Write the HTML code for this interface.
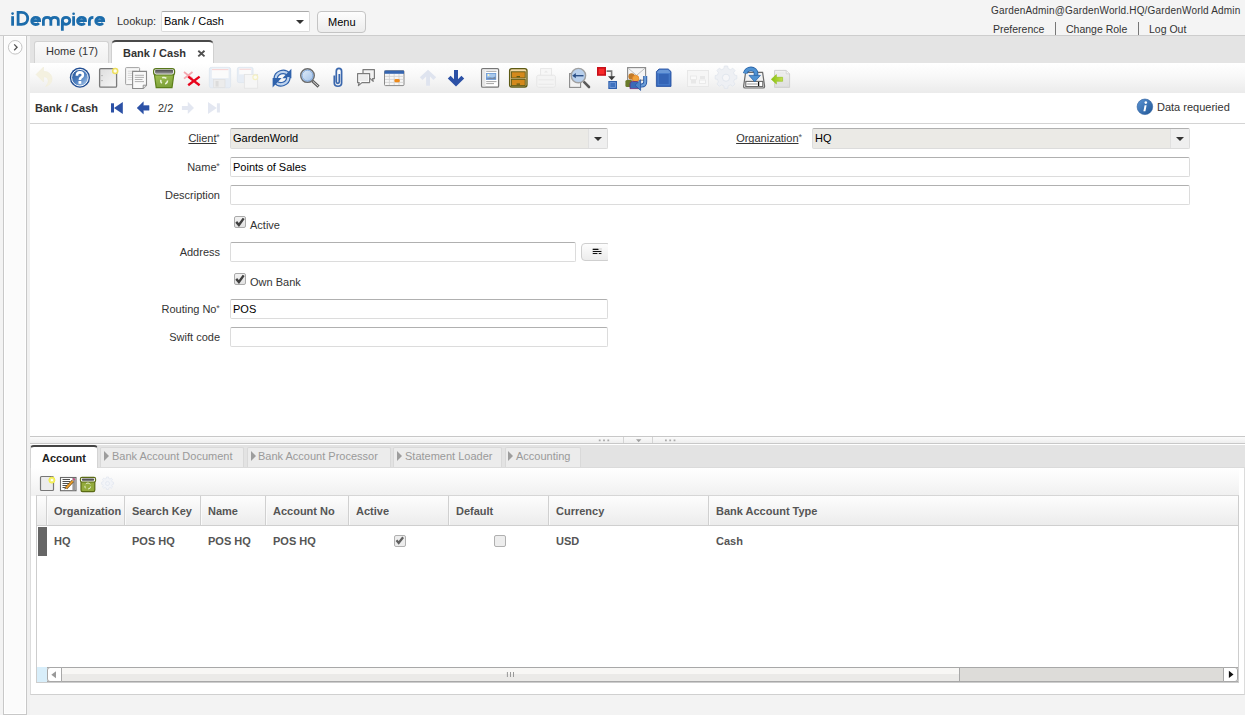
<!DOCTYPE html>
<html><head><meta charset="utf-8">
<style>
*{box-sizing:border-box;margin:0;padding:0}
html,body{width:1245px;height:715px;overflow:hidden;background:#f3f3f3;font-family:"Liberation Sans",sans-serif;font-size:11px;color:#333}
.a{position:absolute}
.t{position:absolute;white-space:nowrap;line-height:12px}
.b{font-weight:bold}
.r{text-align:right}
.u{text-decoration:underline;text-decoration-skip-ink:none}
#hdr{left:0;top:0;width:1245px;height:36px;background:#f4f4f4;border-bottom:1px solid #cdcdcd}
#lp{left:3px;top:36px;width:24px;height:679px;background:#fbfbfb;border:1px solid #c8c8c8;border-top:none;box-shadow:inset 0 0 0 1px #fff}
.fld{position:absolute;background:#fff;border:1px solid #dcdcdc;border-top-color:#b0b0b0;border-radius:2px}
.ro{background:#ebeae6}
.dbtn{position:absolute;background:#efefef;border-left:1px solid #e0e0e0}
.tri{position:absolute;width:0;height:0;border-left:4px solid transparent;border-right:4px solid transparent;border-top:4px solid #333}
.ast{position:absolute;font-size:9px;line-height:9px;color:#555}
.chk{position:absolute;width:12px;height:12px;border:1px solid #aaa;border-radius:2px;background:linear-gradient(#f2f2f2,#e2e2e2)}
svg{position:absolute;overflow:visible}
.dtab{position:absolute;top:447px;height:20px;background:#ececec;border:1px solid #d9d9d9;border-bottom:none;border-radius:2px 2px 0 0}
.dtt{position:absolute;top:450px;white-space:nowrap;line-height:12px;color:#9a9a9a}
.dtri{position:absolute;top:451px;width:0;height:0;border-top:5px solid transparent;border-bottom:5px solid transparent;border-left:5px solid #9d9d9d}
.gh{position:absolute;top:505px;white-space:nowrap;line-height:12px;font-weight:bold;color:#555}
.gv{position:absolute;top:535px;white-space:nowrap;line-height:12px;font-weight:bold;color:#555}
.gsep{position:absolute;top:496px;width:2px;height:29px;border-left:1px solid #d0d0d0;border-right:1px solid #fafafa}
</style></head><body>
<!-- HEADER -->
<div id="hdr" class="a"></div>
<svg style="left:0;top:0" width="110" height="35" viewBox="0 0 110 35">
  <g fill="none" stroke="#1c6cab" stroke-width="2.8">
    <path d="M12.6 16.2V25.7"/>
    <path d="M18.1 25.7V12.4H21.5C25.5 12.4 27.7 15.3 27.7 18.55C27.7 21.8 25.5 24.3 21.5 24.3H16.7"/>
    <path d="M31.7 20.6H39.6C39.6 18.5 37.9 17.4 35.65 17.4C33.4 17.4 31.7 19 31.7 20.95C31.7 23 33.4 24.5 35.65 24.5C37 24.5 38.2 24 38.9 23.1"/>
    <path d="M43.4 25.7V20.5C43.4 18.5 44.9 17.4 47.1 17.4C49.3 17.4 50.85 18.5 50.85 20.5V25.7M50.85 20.5C50.85 18.5 52.4 17.4 54.6 17.4C56.8 17.4 58.3 18.5 58.3 20.5V25.7"/>
    <path d="M62.35 30.8V20.85C62.35 18.7 64 17.4 66.1 17.4C68.2 17.4 69.8 18.9 69.8 20.85C69.8 22.8 68.2 24.3 66.1 24.3C64 24.3 62.35 22.9 62.35 20.85"/>
    <path d="M73.6 16.2V25.7"/>
    <path d="M77.55 20.6H85.45C85.45 18.5 83.75 17.4 81.5 17.4C79.25 17.4 77.55 19 77.55 20.95C77.55 23 79.25 24.5 81.5 24.5C82.85 24.5 84.05 24 84.75 23.1"/>
    <path d="M89.4 25.7V21C89.4 18.8 90.9 17.4 93.4 17.4"/>
    <path d="M95.75 20.6H103.65C103.65 18.5 101.95 17.4 99.7 17.4C97.45 17.4 95.75 19 95.75 20.95C95.75 23 97.45 24.5 99.7 24.5C101.05 24.5 102.25 24 102.95 23.1"/>
  </g>
  <circle cx="12.6" cy="13.6" r="1.35" fill="#1c6cab"/>
  <circle cx="73.6" cy="13.75" r="1.35" fill="#1c6cab"/>
</svg>
<div class="t" style="left:117px;top:15px;color:#333">Lookup:</div>
<div class="fld" style="left:161px;top:11px;width:149px;height:21px;border-color:#dadada;border-top-color:#aaa"></div>
<div class="t" style="left:164px;top:15px;color:#000">Bank / Cash</div>
<div class="tri" style="left:296px;top:20px"></div>
<div class="a" style="left:317px;top:11px;width:49px;height:22px;border:1px solid #c4c4c4;border-radius:4px;background:linear-gradient(#fdfdfd,#ececec)"></div>
<div class="t" style="left:328px;top:16px;color:#000">Menu</div>
<div class="t" style="left:991px;top:5px;font-size:10px;color:#333;letter-spacing:0.18px">GardenAdmin@GardenWorld.HQ/GardenWorld Admin</div>
<div class="t" style="left:993px;top:23px;font-size:10.5px;color:#333">Preference</div>
<div class="a" style="left:1055px;top:22px;width:1px;height:13px;background:#777"></div>
<div class="t" style="left:1066px;top:23px;font-size:10.5px;color:#333">Change Role</div>
<div class="a" style="left:1138px;top:22px;width:1px;height:13px;background:#777"></div>
<div class="t" style="left:1149px;top:23px;font-size:10.5px;color:#333">Log Out</div>
<!-- LEFT PANEL -->
<div id="lp" class="a"></div>
<svg style="left:8px;top:40px" width="15" height="15" viewBox="0 0 15 15">
  <circle cx="7.2" cy="7.3" r="6.8" fill="#fff" stroke="#c4c4c4" stroke-width="1"/>
  <path d="M6.2 4.4L9.1 7.3L6.2 10.3" fill="none" stroke="#555" stroke-width="1.3"/>
</svg>
<!-- MAIN -->
<div class="a" style="left:27px;top:36px;width:3px;height:679px;background:#f1f1f1"></div>
<div class="a" style="left:30px;top:36px;width:1215px;height:27px;background:#e4e4e4"></div>
<div class="a" style="left:34px;top:41px;width:75px;height:22px;border:1px solid #d2d2d2;border-bottom:none;border-radius:3px 3px 0 0;background:linear-gradient(#fafafa,#f0f0f0)"></div>
<div class="t" style="left:46px;top:45px;color:#333">Home (17)</div>
<div class="a" style="left:111px;top:40px;width:103px;height:23px;border:1px solid #d0d0d0;border-top:2px solid #4a4a4a;border-bottom:none;border-radius:5px 5px 0 0;background:#fff"></div>
<div class="t b" style="left:123px;top:47px;color:#333">Bank / Cash</div>
<svg style="left:197px;top:50px" width="9" height="9" viewBox="0 0 9 9"><path d="M1.3 0.8L7.5 6.4M7.5 0.8L1.3 6.4" stroke="#505050" stroke-width="1.9"/></svg>
<!-- toolbar -->
<div class="a" style="left:30px;top:63px;width:1215px;height:30px;background:linear-gradient(#ffffff,#f8f8f8 45%,#ebebeb)"></div>
<!-- breadcrumb row -->
<div class="a" style="left:30px;top:93px;width:1215px;height:31px;background:#fff;border-bottom:1px solid #d4d4d4"></div>
<div class="t b" style="left:35px;top:102px;color:#333">Bank / Cash</div>
<div class="t" style="left:158px;top:102px;color:#333">2/2</div>
<div class="t" style="left:1157px;top:101px;color:#333">Data requeried</div>
<!-- form bg -->
<div class="a" style="left:30px;top:124px;width:1215px;height:312px;background:#fff"></div>
<!-- TOOLBAR ICONS -->
<svg style="left:0;top:0" width="1245" height="130" viewBox="0 0 1245 130">
  <defs>
    <linearGradient id="gHelp" x1="0.15" y1="0.1" x2="0.85" y2="0.9"><stop offset="0" stop-color="#2c5c9e"/><stop offset="0.55" stop-color="#4f80c0"/><stop offset="1" stop-color="#9fc0e6"/></linearGradient>
    <linearGradient id="gNew" x1="0" y1="0" x2="1" y2="1"><stop offset="0" stop-color="#dedede"/><stop offset="1" stop-color="#f6f6f6"/></linearGradient>
    <linearGradient id="gTrash" x1="0" y1="0" x2="0.3" y2="1"><stop offset="0" stop-color="#a6c656"/><stop offset="1" stop-color="#7ea23a"/></linearGradient>
    <linearGradient id="gTrashIn" x1="0" y1="0" x2="0" y2="1"><stop offset="0" stop-color="#4a4a4a"/><stop offset="1" stop-color="#9a9a9a"/></linearGradient>
    <linearGradient id="gPage" x1="0" y1="0" x2="0" y2="1"><stop offset="0" stop-color="#f2f2f2"/><stop offset="1" stop-color="#dcdcdc"/></linearGradient>
    <linearGradient id="gArr" x1="0" y1="0" x2="1" y2="0"><stop offset="0" stop-color="#88c010"/><stop offset="1" stop-color="#c4e050"/></linearGradient>
    <linearGradient id="gInfo" x1="0" y1="0" x2="1" y2="1"><stop offset="0" stop-color="#5c94d4"/><stop offset="1" stop-color="#1f5696"/></linearGradient>
    <linearGradient id="gLens" x1="0" y1="0" x2="1" y2="1"><stop offset="0" stop-color="#e6f0fa"/><stop offset="1" stop-color="#9dbde6"/></linearGradient>
  </defs>
  <!-- undo faded -->
  <path d="M36 74.5L43.5 67V71.3C48.5 71.3 52 74.5 52 78.8C52 82.5 49.5 85.5 45.5 86.5C47.5 84.5 48.3 82.5 48.2 80.5C48 78 46.2 76.8 43.5 76.8V82Z" fill="#f4f1e0" stroke="#f0ecd6" stroke-width="0.5"/>
  <!-- help -->
  <circle cx="79.9" cy="77.7" r="10.1" fill="#234f94"/>
  <circle cx="79.9" cy="77.7" r="8.3" fill="url(#gHelp)" stroke="#f4f8fc" stroke-width="1"/>
  <path d="M76.9 75.7C76.9 73.2 78.3 72.4 79.8 72.4C81.6 72.4 82.9 73.5 82.9 75C82.9 76.7 81.4 77.3 80.6 78C80.1 78.5 79.9 78.9 79.9 80" fill="none" stroke="#fff" stroke-width="2.6"/>
  <rect x="78.5" y="81" width="2.8" height="2.8" fill="#fff"/>
  <!-- new -->
  <rect x="99.6" y="68.6" width="17" height="18.6" rx="1.2" fill="url(#gNew)" stroke="#7a7a7a" stroke-width="1.3"/>
  <circle cx="102" cy="75.6" r="0.7" fill="#999"/><circle cx="102" cy="80.6" r="0.7" fill="#999"/>
  <circle cx="115.2" cy="70.9" r="2.5" fill="#fffce8" stroke="#eee060" stroke-width="1.5"/>
  <!-- copy -->
  <rect x="125.6" y="67.6" width="14" height="17" rx="0.8" fill="#f7f7f7" stroke="#a2a2a2" stroke-width="1"/>
  <path d="M127.8 71.2H137M127.8 73.3H137M127.8 75.4H137M127.8 77.5H137M127.8 79.6H137" stroke="#d0d0d0" stroke-width="0.8"/>
  <path d="M132.6 71.4H146.5V85.2L143.2 88.5H132.6Z" fill="#f9f9f9" stroke="#8a8a8a" stroke-width="1.1"/>
  <path d="M143.2 88.5V85.2H146.5" fill="#e0e0e0" stroke="#8a8a8a" stroke-width="0.9"/>
  <path d="M134.8 75.3H144M134.8 77.4H144M134.8 79.5H142.5M134.8 81.6H144" stroke="#a8a8a8" stroke-width="0.9"/>
  <!-- trash -->
  <path d="M154.2 73L156.2 87.6H172L174 73Z" fill="url(#gTrash)" stroke="#5c8019" stroke-width="1.2"/>
  <rect x="153.6" y="68.6" width="21" height="6.4" rx="2.4" fill="#fafafa" stroke="#58781a" stroke-width="1.2"/>
  <rect x="155.1" y="69.8" width="18" height="4" rx="1.2" fill="url(#gTrashIn)"/>
  <path d="M162.2 77.8C163.5 77.3 165 77.3 166.4 78.3M167.6 80.6C167.6 82 166.8 83.3 165.2 84M161.8 83.2C160.9 82.4 160.5 81.2 160.8 79.9" fill="none" stroke="#eef5dc" stroke-width="1.5"/>
  <!-- red x -->
  <path d="M184 72L192.5 78.6M192.5 72L184 78.6" stroke="#f4a6ae" stroke-width="1.8"/>
  <path d="M188.2 76.6L199.6 85.2M199.6 76.6L188.2 85.2" stroke="#e8041c" stroke-width="2.4"/>
  <!-- save faded -->
  <rect x="209.4" y="67.4" width="21.2" height="20.4" rx="1.8" fill="#e7edf5" stroke="#dfe6ef" stroke-width="0.9"/>
  <rect x="211.8" y="68.6" width="16.8" height="9.6" fill="#fbfbfb"/>
  <path d="M212 69.6H228.4" stroke="#f6cccc" stroke-width="0.9"/>
  <rect x="213.6" y="79.6" width="11.4" height="8" fill="#ececec" stroke="#e0e0e0" stroke-width="0.7"/>
  <rect x="215.6" y="81" width="3" height="5.6" fill="#dcdcdc"/>
  <!-- save new faded -->
  <rect x="237.4" y="67.4" width="15.6" height="15.2" rx="1.5" fill="#e7edf5" stroke="#dfe6ef" stroke-width="0.9"/>
  <rect x="239.2" y="68.4" width="12" height="6" fill="#fbfbfb"/>
  <path d="M239.5 69.3H251" stroke="#f6cccc" stroke-width="0.8"/>
  <rect x="244.4" y="74.4" width="13.2" height="13.8" fill="#f6f6f6" stroke="#e4e4e4" stroke-width="0.9"/>
  <circle cx="255.3" cy="77.2" r="2.4" fill="#fbfbf2" stroke="#f4f0c4" stroke-width="1.2"/>
  <!-- refresh -->
  <path d="M275.6 79.2A7.4 7.4 0 0 1 288.7 74.6" fill="none" stroke="#2f62ac" stroke-width="4.6"/>
  <path d="M275.6 79.2A7.4 7.4 0 0 1 288.7 74.6" fill="none" stroke="#bcd2ee" stroke-width="2.2"/>
  <path d="M291.4 68.8V78.3H282.4Z" fill="#2f62ac"/>
  <path d="M288.4 77A7.4 7.4 0 0 1 275.3 81.6" fill="none" stroke="#2f62ac" stroke-width="4.6"/>
  <path d="M288.4 77A7.4 7.4 0 0 1 275.3 81.6" fill="none" stroke="#bcd2ee" stroke-width="2.2"/>
  <path d="M272.6 87.4V77.9H281.6Z" fill="#2f62ac"/>
  <!-- find -->
  <path d="M312.3 80.8L318.6 86.6" stroke="#5a5a5a" stroke-width="3"/>
  <path d="M312.8 81.3L318.1 86.1" stroke="#dedede" stroke-width="1"/>
  <circle cx="307.5" cy="75.6" r="6.8" fill="url(#gLens)" stroke="#6c6c6c" stroke-width="1.4"/>
  <circle cx="307.5" cy="75.6" r="5.4" fill="none" stroke="#6d9ad4" stroke-width="0.7"/>
  <!-- paperclip -->
  <path d="M334.3 75.5V83C334.3 87.3 341.6 87.3 341.6 83V71.2C341.6 67.5 336.3 67.5 336.3 71.2V81.8C336.3 83.8 339.3 83.8 339.3 81.8V74" fill="none" stroke="#3a67ad" stroke-width="1.7"/>
  <!-- chat -->
  <path d="M363 69.6H374.4V78.6H372.6L373.2 81.4L370.2 78.6H363Z" fill="#f2f2f2" stroke="#7c7c7c" stroke-width="1.2" stroke-linejoin="round"/>
  <path d="M357.6 73.6H369.6V82.6H362L358.4 85.6L359.2 82.6H357.6Z" fill="#fafafa" stroke="#7c7c7c" stroke-width="1.2" stroke-linejoin="round"/>
  <rect x="359.2" y="75.2" width="8.8" height="5.8" fill="#ececec"/>
  <!-- grid toggle -->
  <rect x="384.5" y="70.6" width="19.5" height="15" rx="1" fill="#f6f6f6" stroke="#8a8a8a" stroke-width="1"/>
  <path d="M385 76.4H403.5M385 79.4H403.5M385 82.4H403.5M389.4 74V85M394.2 74V85M399 74V85" stroke="#cfcfcf" stroke-width="0.8"/>
  <rect x="384.5" y="70.6" width="19.5" height="3.2" fill="#3565b0"/>
  <rect x="394.4" y="78.9" width="5.4" height="3.4" rx="1.4" fill="#ee8a1a"/>
  <!-- up faded -->
  <path d="M426.1 85.8H430V76.6L433.4 80L436.2 77.3L428 69.8L419.8 77.3L422.6 80L426.1 76.6Z" fill="#dfe4ef"/>
  <!-- down -->
  <path d="M454 70H458V79.2L461.4 75.8L464.2 78.5L456 86.4L447.8 78.5L450.6 75.8L454 79.2Z" fill="#2c51a6"/>
  <!-- report -->
  <rect x="481.6" y="68.6" width="17" height="18.6" rx="1.2" fill="#fff" stroke="#777" stroke-width="1.3"/>
  <rect x="482.5" y="69.5" width="3" height="17" fill="#e6e6e6"/>
  <path d="M486.2 71.3H496.5M486.2 81.6H496.5M486.2 83.6H494" stroke="#9a9a9a" stroke-width="0.9"/>
  <rect x="486" y="73" width="10.2" height="6.9" fill="#6d9bd6"/>
  <rect x="486.8" y="73.8" width="8.6" height="3.6" fill="#a8c8ec"/>
  <circle cx="488.5" cy="75" r="0.9" fill="#fff8c0"/>
  <path d="M486.8 79.1L490 77.4L492.5 78.2L495.4 76.3V79.1Z" fill="#7888a0"/>
  <!-- archive -->
  <rect x="509.6" y="68.6" width="17.4" height="18.4" rx="2.2" fill="#f2d9a6" stroke="#5d5a14" stroke-width="1.3"/>
  <rect x="511.4" y="71.8" width="13.8" height="6.2" fill="#d4891c" stroke="#5d5a14" stroke-width="0.9"/>
  <rect x="511.4" y="79.4" width="13.8" height="6.2" fill="#d4891c" stroke="#5d5a14" stroke-width="0.9"/>
  <path d="M516.6 76.6H520M516.6 84.2H520" stroke="#5d5a14" stroke-width="1.2"/>
  <!-- print faded -->
  <rect x="540.6" y="68.6" width="11" height="8" fill="#f7f7f7" stroke="#e6e6e6" stroke-width="0.9"/>
  <path d="M536.8 77C536.8 75.8 537.6 75.2 538.6 75.2H553.6C554.6 75.2 555.4 75.8 555.4 77V85.4C555.4 86.6 554.6 87.2 553.6 87.2H538.6C537.6 87.2 536.8 86.6 536.8 85.4Z" fill="#f4f4f4" stroke="#e4e4e4" stroke-width="0.9"/>
  <path d="M538.5 79.8H553.8M538.5 84.3H553.8" stroke="#e6e6e6" stroke-width="0.8"/>
  <path d="M546 70.5L544 72.5H548Z" fill="#e8e8e8"/>
  <!-- zoom across -->
  <rect x="569.6" y="73.6" width="11" height="13.8" fill="#f2f2f2" stroke="#8a8a8a" stroke-width="1.1"/>
  <path d="M584.2 82.2L589 87" stroke="#5a5a5a" stroke-width="2.6" stroke-linecap="round"/>
  <circle cx="578.4" cy="75.6" r="7.2" fill="#b9d0ec" stroke="#a0a0a0" stroke-width="1.4"/>
  <path d="M573.8 75.7H583.5" stroke="#2b4f86" stroke-width="1.4"/>
  <path d="M572.2 75.7L575.8 73.1V78.3Z" fill="#2b4f86"/>
  <!-- workflow -->
  <rect x="597" y="67" width="9" height="8.8" fill="#c8101a"/>
  <rect x="598.6" y="68.6" width="5.8" height="5.6" fill="#f82a2a"/>
  <path d="M606.6 71.1H611.6V77" fill="none" stroke="#7a7a7a" stroke-width="1.6"/>
  <path d="M608 76.3H615.4L611.7 80.3Z" fill="#3a3a3a"/>
  <rect x="608.3" y="81" width="8.7" height="8" fill="#2e60ae"/>
  <rect x="609.9" y="82.6" width="5.5" height="4.8" fill="#3f72c0" stroke="#78a0dc" stroke-width="0.8"/>
  <!-- request -->
  <rect x="627.6" y="67.6" width="18" height="12.6" fill="#f5f5f5" stroke="#888" stroke-width="1.1"/>
  <path d="M628.2 68.2L636.6 75.4L645 68.2" fill="none" stroke="#b0b0b0" stroke-width="0.8"/>
  <rect x="625.4" y="80" width="6.6" height="7" rx="1.5" fill="#6a7a2a"/>
  <circle cx="631.6" cy="76.4" r="3.2" fill="#c07a2a"/>
  <circle cx="635.6" cy="78.6" r="3.3" fill="#f0a23c" stroke="#e07818" stroke-width="0.6"/>
  <path d="M630 88.6V84C630 82.2 631.4 81.5 633 81.5H637.5L640 88.6Z" fill="#3a6ab8" stroke="#6a2a7a" stroke-width="0.8"/>
  <path d="M645.2 76V81.8C645.2 84.4 643.8 85.6 641.4 85.6H639.5" fill="none" stroke="#2a58a2" stroke-width="4"/>
  <path d="M645.2 76V81.8C645.2 84.4 643.8 85.6 641.4 85.6H639.5" fill="none" stroke="#6c9ed8" stroke-width="2.2"/>
  <path d="M635 85.2L640.6 79.8V90.4Z" fill="#4c82c8" stroke="#2a58a2" stroke-width="0.8"/>
  <!-- product info -->
  <path d="M656.4 71.6L659 69H668.2L671 71.6V86.4H656.4Z" fill="#3769bc" stroke="#2a56a4" stroke-width="0.9"/>
  <path d="M657.2 71.8L659.3 69.8H667.9L670.2 71.8V73.2H657.2Z" fill="#6a98d8"/>
  <rect x="658.2" y="73.6" width="11" height="11.2" fill="#3464b6" stroke="#4e82cf" stroke-width="0.8"/>
  <!-- toggle faded -->
  <rect x="687.5" y="70.5" width="21" height="16" fill="#f6f6f6" stroke="#e8e8e8" stroke-width="1"/>
  <rect x="690.5" y="76" width="6" height="3.5" fill="#fafafa" stroke="#e6e6e6" stroke-width="0.8"/>
  <rect x="691" y="80" width="5" height="3.5" fill="#e8e8e8"/>
  <rect x="700" y="76" width="5" height="3" fill="#e8e8e8"/>
  <rect x="699.5" y="80" width="6" height="3.5" fill="#fafafa" stroke="#e6e6e6" stroke-width="0.8"/>
  <!-- gear faded -->
  <g transform="translate(726 77.7)" fill="#eef0f4" stroke="#dfe4ec" stroke-width="0.9">
    <path d="M-2 -10.8H2L2.6 -7.6L5.5 -6.4L8.1 -8.2L10.9 -5.4L9.1 -2.8L10.3 0.1L13 0.7V4.7L10.3 5.3L9.1 8.2L10.9 10.8L8.1 13.6L5.5 11.8L2.6 13L2 16.2H-2L-2.6 13L-5.5 11.8L-8.1 13.6L-10.9 10.8L-9.1 8.2L-10.3 5.3L-13 4.7V0.7L-10.3 0.1L-9.1 -2.8L-10.9 -5.4L-8.1 -8.2L-5.5 -6.4L-2.6 -7.6Z" transform="translate(0 -2.7) scale(0.83)"/>
    <circle cx="0" cy="0" r="3.6" fill="#f6f6f8"/>
  </g>
  <!-- export -->
  <path d="M745.6 72.4H762.6L764.6 86.4C764.6 87.4 764 88 763 88H745.2C744.2 88 743.6 87.4 743.6 86.4Z" fill="#f2f2f2" stroke="#6a6a6a" stroke-width="1.2"/>
  <rect x="745.8" y="81.4" width="17" height="5.2" fill="#fff" stroke="#666" stroke-width="1.1"/>
  <rect x="747.2" y="83" width="10.4" height="2" fill="#cdcdcd"/>
  <path d="M758.6 82V86" stroke="#111" stroke-width="1.3"/>
  <path d="M745.2 73.4C745.6 70.4 748.4 68.9 751 68.9C753.8 68.9 756 70.8 756 73.4V75.8" fill="none" stroke="#2b64a8" stroke-width="4.6"/>
  <path d="M745.2 73.4C745.6 70.4 748.4 68.9 751 68.9C753.8 68.9 756 70.8 756 73.4V75.8" fill="none" stroke="#4f92d2" stroke-width="3"/>
  <path d="M749 75.4H760.4L754.7 81.8Z" fill="#4f92d2" stroke="#2b64a8" stroke-width="0.8"/>
  <!-- import -->
  <path d="M774.6 70.4H786.2L789.6 73.8V87.4H774.6Z" fill="url(#gPage)" stroke="#d0d0d0" stroke-width="1"/>
  <path d="M786.2 70.4V73.8H789.6" fill="#f4f4f4" stroke="#d0d0d0" stroke-width="0.8"/>
  <path d="M776.5 73H784M776.5 85H787" stroke="#e6e6e6" stroke-width="0.8"/>
  <path d="M771.3 79.3L776.4 74.6V77.3H782.6V81.3H776.4V84Z" fill="url(#gArr)" stroke="#90c018" stroke-width="0.6"/>
  <!-- breadcrumb nav -->
  <rect x="111" y="103.3" width="3" height="9.2" fill="#2c51a6"/>
  <path d="M114 107.9L122.8 102V113.9Z" fill="#2c51a6"/>
  <path d="M137 107.9L143.4 101.8V105.6H149.1V110.3H143.4V113.9Z" fill="#2c51a6" stroke="#2c51a6" stroke-width="0.4" stroke-linejoin="round"/>
  <path d="M194 107.9L187.8 101.8V105.9H181.9V110H187.8V113.9Z" fill="#e3e7f1"/>
  <path d="M208 102L216.8 107.9L208 113.9Z" fill="#e3e7f1"/>
  <rect x="216.9" y="103.3" width="3" height="9.2" fill="#e3e7f1"/>
  <!-- info -->
  <circle cx="1144.9" cy="106.8" r="7.8" fill="url(#gInfo)" stroke="#2a5c9c" stroke-width="0.6"/>
  <circle cx="1145.8" cy="102.6" r="1.3" fill="#fff"/>
  <path d="M1144.6 105.2H1146.6L1145.4 111.2H1143.4Z" fill="#fff"/>
</svg>
<!-- FORM -->
<div class="t r u" style="left:150px;width:66.5px;top:132px;color:#333">Client</div>
<div class="ast" style="left:216.3px;top:133px">*</div>
<div class="fld ro" style="left:230px;top:128px;width:378px;height:21px"></div>
<div class="dbtn" style="left:588px;top:129px;width:19px;height:19px"></div>
<div class="tri" style="left:594px;top:137px"></div>
<div class="t" style="left:233px;top:132px;color:#000">GardenWorld</div>

<div class="t r u" style="left:700px;width:98.5px;top:132px;color:#333">Organization</div>
<div class="ast" style="left:798.6px;top:133px">*</div>
<div class="fld ro" style="left:812px;top:128px;width:378px;height:21px"></div>
<div class="dbtn" style="left:1170px;top:129px;width:19px;height:19px"></div>
<div class="tri" style="left:1176px;top:137px"></div>
<div class="t" style="left:815px;top:132px;color:#000">HQ</div>

<div class="t r" style="left:150px;width:66.5px;top:161px;color:#333">Name</div>
<div class="ast" style="left:216.3px;top:162px">*</div>
<div class="fld" style="left:230px;top:157px;width:960px;height:20px"></div>
<div class="t" style="left:233px;top:161px;color:#000">Points of Sales</div>

<div class="t r" style="left:120px;width:100px;top:189px;color:#333">Description</div>
<div class="fld" style="left:230px;top:185px;width:960px;height:20px"></div>

<div class="chk" style="left:234px;top:216px"></div>
<svg style="left:0;top:0" width="1" height="1"><path d="M236.2 221.9L238.9 225L243.7 218.4" fill="none" stroke="#404040" stroke-width="2.4"/></svg>
<div class="t" style="left:250px;top:219px;color:#333">Active</div>

<div class="t r" style="left:120px;width:100px;top:246px;color:#333">Address</div>
<div class="fld" style="left:230px;top:242px;width:346px;height:20px"></div>
<div class="a" style="left:581px;top:243px;width:30px;height:18px;border:1px solid #cfcfcf;border-radius:4px;background:linear-gradient(#fdfdfd,#ececec)"></div>
<div class="a" style="left:608px;top:242px;width:4px;height:20px;background:#fff"></div>
<svg style="left:0;top:0" width="1" height="1"><rect x="592.2" y="248" width="9.6" height="6.8" fill="#e2e2e2"/><rect x="592.2" y="250.2" width="9.6" height="4.6" fill="#ececec"/><path d="M593.2 249.4H598M593.2 251.5H601M593.2 253.5H597M599.2 253.5H601" stroke="#111" stroke-width="1.1" stroke-linecap="round"/></svg>

<div class="chk" style="left:234px;top:273px"></div>
<svg style="left:0;top:0" width="1" height="1"><path d="M236.2 278.9L238.9 282L243.7 275.4" fill="none" stroke="#404040" stroke-width="2.4"/></svg>
<div class="t" style="left:250px;top:276px;color:#333">Own Bank</div>

<div class="t r" style="left:120px;width:96.5px;top:303px;color:#333">Routing No</div>
<div class="ast" style="left:216.3px;top:304px">*</div>
<div class="fld" style="left:230px;top:299px;width:378px;height:20px"></div>
<div class="t" style="left:233px;top:303px;color:#000">POS</div>

<div class="t r" style="left:120px;width:100px;top:331px;color:#333">Swift code</div>
<div class="fld" style="left:230px;top:327px;width:378px;height:20px"></div>

<!-- SPLITTER -->
<div class="a" style="left:30px;top:436px;width:1215px;height:8px;background:linear-gradient(#fbfbfb,#eeeeee);border-top:1px solid #c8c8c8;border-bottom:1px solid #c8c8c8"></div>
<svg style="left:0;top:0" width="1" height="1">
  <path d="M598.8 439.4h1.8v1.8h-1.8zM603.1 439.4h1.8v1.8h-1.8zM607.4 439.4h1.8v1.8h-1.8zM665 439.4h1.8v1.8h-1.8zM669.3 439.4h1.8v1.8h-1.8zM673.6 439.4h1.8v1.8h-1.8z" fill="#aaa"/>
  <path d="M623.5 437V443M652.5 437V443" stroke="#d4d4d4" stroke-width="1"/>
  <path d="M636 439.2H641.4L638.7 442.2Z" fill="#a0a0a0"/>
</svg>
<!-- DETAIL TABS -->
<div class="a" style="left:30px;top:444px;width:1215px;height:24px;background:linear-gradient(#fff 0,#fff 1px,#e3e3e3 1px,#e3e3e3 23px,#dbdbdb 23px)"></div>
<div class="a" style="left:30px;top:445px;width:68px;height:23px;border:1px solid #d4d4d4;border-top:2px solid #454545;border-bottom:none;border-radius:4px 4px 0 0;background:#fff"></div>
<div class="t b" style="left:42px;top:452px;color:#222">Account</div>
<div class="dtab" style="left:100px;width:144px"></div>
<div class="dtri" style="left:104px"></div>
<div class="dtt" style="left:112px">Bank Account Document</div>
<div class="dtab" style="left:247px;width:144px"></div>
<div class="dtri" style="left:250.5px"></div>
<div class="dtt" style="left:258px">Bank Account Processor</div>
<div class="dtab" style="left:393px;width:109px"></div>
<div class="dtri" style="left:397px"></div>
<div class="dtt" style="left:405px">Statement Loader</div>
<div class="dtab" style="left:504.5px;width:76px"></div>
<div class="dtri" style="left:508px"></div>
<div class="dtt" style="left:516px">Accounting</div>
<!-- DETAIL BODY -->
<div class="a" style="left:30px;top:468px;width:1215px;height:227px;background:#fff;border-left:1px solid #dcdcdc;border-right:1px solid #dcdcdc;border-bottom:1px solid #d0d0d0"></div>
<div class="a" style="left:31px;top:468px;width:1208px;height:28px;background:linear-gradient(#ffffff,#f0f0f0)"></div>
<svg style="left:0;top:0" width="1" height="1">
  <!-- new -->
  <rect x="40.5" y="476.5" width="13" height="14" rx="1" fill="#ececec" stroke="#777" stroke-width="1.2"/>
  <circle cx="51.9" cy="480.1" r="3" fill="#f2f07a" stroke="#f4ee40" stroke-width="1"/>
  <circle cx="51.9" cy="480.1" r="1.2" fill="#fff"/>
  <!-- edit -->
  <rect x="60.5" y="477.5" width="15.5" height="13.2" fill="#fff" stroke="#6a6a6a" stroke-width="1.1"/>
  <path d="M62.5 479.5H70M62.5 481.5H70M62.5 483.5H69M62.5 485.5H67.5M62.5 487.5H66" stroke="#505050" stroke-width="1"/>
  <rect x="72.4" y="478" width="3" height="12.2" fill="#999"/>
  <path d="M73 478.5L74.8 480" stroke="#d04080" stroke-width="1.2"/>
  <path d="M66 488.2L72.8 481" stroke="#6a4a10" stroke-width="3"/><path d="M66 488.2L72.8 481" stroke="#f0a030" stroke-width="1.8"/>
  <path d="M64.8 489.2L65.6 487.8" stroke="#333" stroke-width="1"/>
  <!-- delete -->
  <path d="M81 480.5V490C81 491 81.6 491.6 82.6 491.6H93.2C94.2 491.6 94.8 491 94.8 490V480.5Z" fill="#93ab3c" stroke="#5a6a14" stroke-width="1.2"/>
  <rect x="80.4" y="477.4" width="15.2" height="4.6" rx="1.6" fill="#fff" stroke="#5a6a14" stroke-width="1.1"/>
  <rect x="81.8" y="478.6" width="12.4" height="2.2" rx="1" fill="#555"/>
  <path d="M85.8 484A2.6 2.6 0 0 1 90.2 484.5M90.6 486.5A2.6 2.6 0 0 1 88 489M85.6 488.3A2.6 2.6 0 0 1 85 485.8" fill="none" stroke="#e8f0d0" stroke-width="1"/>
  <!-- gear faded -->
  <g transform="translate(107.5 483.5) scale(0.56)" fill="#f2f4f8" stroke="#dfe5ee" stroke-width="1.3">
    <path d="M-2 -10.8H2L2.6 -7.6L5.5 -6.4L8.1 -8.2L10.9 -5.4L9.1 -2.8L10.3 0.1L13 0.7V4.7L10.3 5.3L9.1 8.2L10.9 10.8L8.1 13.6L5.5 11.8L2.6 13L2 16.2H-2L-2.6 13L-5.5 11.8L-8.1 13.6L-10.9 10.8L-9.1 8.2L-10.3 5.3L-13 4.7V0.7L-10.3 0.1L-9.1 -2.8L-10.9 -5.4L-8.1 -8.2L-5.5 -6.4L-2.6 -7.6Z" transform="translate(0 -2.7) scale(0.83)"/>
    <circle cx="0" cy="0" r="3.6"/>
  </g>
</svg>
<!-- GRID -->
<div class="a" style="left:36px;top:495px;width:1203px;height:188px;background:#fff;border:1px solid #cdcdcd;border-top-color:#d6d6d6"></div>
<div class="a" style="left:37px;top:496px;width:1201px;height:30px;background:linear-gradient(#fdfdfd,#ececec);border-bottom:1px solid #cfcfcf"></div>
<div class="gsep" style="left:46px"></div>
<div class="gsep" style="left:124px"></div>
<div class="gsep" style="left:200px"></div>
<div class="gsep" style="left:265px"></div>
<div class="gsep" style="left:348px"></div>
<div class="gsep" style="left:448px"></div>
<div class="gsep" style="left:548px"></div>
<div class="gsep" style="left:708px"></div>
<div class="gh" style="left:54px">Organization</div>
<div class="gh" style="left:132px">Search Key</div>
<div class="gh" style="left:208px">Name</div>
<div class="gh" style="left:273px">Account No</div>
<div class="gh" style="left:356px">Active</div>
<div class="gh" style="left:456px">Default</div>
<div class="gh" style="left:556px">Currency</div>
<div class="gh" style="left:716px">Bank Account Type</div>
<div class="a" style="left:38px;top:527px;width:9px;height:29px;background:#666"></div>
<div class="gv" style="left:54px">HQ</div>
<div class="gv" style="left:132px">POS HQ</div>
<div class="gv" style="left:208px">POS HQ</div>
<div class="gv" style="left:273px">POS HQ</div>
<div class="gv" style="left:556px">USD</div>
<div class="gv" style="left:716px">Cash</div>
<div class="a" style="left:394px;top:535px;width:12px;height:12px;border:1px solid #b0b0b0;border-radius:2px;background:#ededed"></div>
<svg style="left:0;top:0" width="1" height="1"><path d="M396.5 540.3L398.7 542.9L403.1 537.3" fill="none" stroke="#606060" stroke-width="2.3"/></svg>
<div class="a" style="left:494px;top:535px;width:12px;height:12px;border:1px solid #b0b0b0;border-radius:2px;background:#ededed"></div>
<!-- SCROLLBAR -->
<div class="a" style="left:37px;top:667px;width:10px;height:15px;background:#d8eefa"></div>
<div class="a" style="left:47px;top:667px;width:1191px;height:15px;background:#dddcd9;border-top:1px solid #a8a8a8;border-bottom:1px solid #a8a8a8"></div>
<div class="a" style="left:61px;top:668px;width:899px;height:13px;background:linear-gradient(#f8f7f5 0,#f8f7f5 50%,#ebeae8 50%,#ebeae8 100%);border-right:1px solid #a8a8a8"></div>
<div class="a" style="left:47px;top:667px;width:15px;height:15px;background:#fff;border:1px solid #a8a8a8;border-radius:3px 0 0 3px"></div>
<div class="a" style="left:1223px;top:667px;width:15px;height:15px;background:#fff;border:1px solid #a8a8a8;border-radius:0 3px 3px 0"></div>
<svg style="left:0;top:0" width="1" height="1">
  <path d="M51.3 674.7L56 671.2V678.2Z" fill="#999"/>
  <path d="M1233.5 674.4L1228.9 670.7V678.1Z" fill="#111"/>
  <path d="M507.4 672V677M510.5 672V677M513.5 672V677" stroke="#999" stroke-width="1"/>
</svg>
</body></html>
